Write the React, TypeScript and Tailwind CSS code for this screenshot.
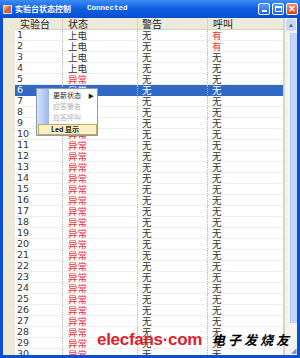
import React from 'react';

type Row = { id: number; status: string; warn: string; call: string };

const rows: Row[] = Array.from({ length: 30 }, (_, i) => {
  const id = i + 1;
  return {
    id,
    status: id <= 4 ? '上电' : '异常',
    warn: '无',
    call: id <= 2 ? '有' : '无',
  };
});

const cjk = { fontFamily: '"Noto Sans CJK SC", "DejaVu Sans", sans-serif' };

function TitleButtons() {
  return (
    <div className="flex items-center gap-[2px] pr-[2px]">
      <div className="w-[12px] h-[12px] rounded-[2px] border border-white bg-gradient-to-b from-[#5a9cff] to-[#1c5fe0] flex items-end justify-center pb-[2px]">
        <div className="w-[5px] h-[2px] bg-white" />
      </div>
      <div className="w-[12px] h-[12px] rounded-[2px] border border-white bg-gradient-to-b from-[#5a9cff] to-[#1c5fe0] flex items-center justify-center">
        <div className="w-[7px] h-[6px] border border-white border-t-2" />
      </div>
      <div className="w-[12px] h-[12px] rounded-[2px] border border-white bg-gradient-to-b from-[#f08a6a] to-[#d43c14] flex items-center justify-center text-white text-[10px] leading-none font-bold" style={{ fontFamily: '"DejaVu Sans", sans-serif' }}>
        ×
      </div>
    </div>
  );
}

export default function App() {
  return (
    <div className="w-[300px] h-[358px] bg-[#0a4fd6] flex flex-col overflow-hidden relative">
      {/* title bar */}
      <div className="h-[18px] shrink-0 flex items-center bg-gradient-to-b from-[#3d8cf7] via-[#0d5fe0] to-[#0a4fd0]">
        <div className="w-[9px] h-[9px] ml-[3px] bg-gradient-to-br from-[#f5d25a] via-[#e55a2a] to-[#3a6fd8] border border-[#ffffffaa]" />
        <span className="ml-[3px] text-white text-[8px] font-bold leading-none whitespace-nowrap" style={cjk}>实验台状态控制</span>
        <span className="ml-[16px] text-white text-[7.5px] font-bold leading-none" style={{ fontFamily: '"Liberation Mono", monospace' }}>Connected</span>
        <div className="flex-1" />
        <TitleButtons />
      </div>

      {/* body */}
      <div className="flex-1 flex mx-[3px] mb-[3px] bg-[#ece9d8] min-h-0">
        <div className="w-[12px] bg-[#ece9d8] shrink-0" />
        <div className="w-[268px] bg-white flex flex-col text-[#333] overflow-hidden" style={cjk}>
          <div className="h-[12px] flex items-center bg-[#ebeadb] border-b border-[#d6d2c2] text-[10px] leading-[11px] text-[#222] shrink-0">
            <div className="w-[48px] pl-[5px] border-r border-[#d6d2c2]">实验台</div>
            <div className="w-[75px] pl-[5px] border-r border-[#d6d2c2]">状态</div>
            <div className="w-[70px] pl-[4px] border-r border-[#d6d2c2]">警告</div>
            <div className="w-[75px] pl-[5px]">呼叫</div>
          </div>
          {rows.map((r) => {
            const sel = r.id === 6;
            return (
              <div
                key={r.id}
                className={`h-[11px] flex text-[9.5px] leading-[10px] shrink-0 border-b ${sel ? 'bg-[#316ac5] text-white border-[#316ac5]' : 'border-[#eeeeee]'}`}
              >
                <div className="w-[48px] pl-[2px] border-r border-dotted border-[#bbb]" style={{ fontFamily: '"DejaVu Sans", sans-serif', fontSize: 9.5 }}>{r.id}</div>
                <div className={`w-[75px] pl-[5px] border-r border-dotted border-[#bbb] ${!sel && r.status === '异常' ? 'text-[#f03030]' : ''}`}>{r.status}</div>
                <div className="w-[70px] pl-[4px] border-r border-dotted border-[#bbb]">{r.warn}</div>
                <div className={`w-[75px] pl-[4px] ${r.call === '有' ? 'text-[#f03030]' : ''}`}>{r.call}</div>
              </div>
            );
          })}
        </div>
        <div className="w-[2px] bg-[#d8d4c8]" />
        {/* scrollbar */}
        <div className="w-[12px] bg-[#f4f3ee] flex flex-col">
          <div className="h-[12px] mx-[1px] mt-[1px] rounded-[2px] bg-[#c8d8f8] flex items-center justify-center text-[#4d6185] text-[6px] leading-none">▲</div>
          <div className="flex-1 flex justify-end py-[2px]">
            <div className="w-[7px] h-[290px] bg-[#c4d5fa] border-l border-[#b2c6f2]" />
          </div>
          <div className="h-[8px] text-[#7b8db8] text-[7px] leading-none text-right pr-[1px]">◢</div>
        </div>
      </div>

      {/* context menu */}
      <div className="absolute left-[36px] top-[88px] w-[62px] h-[48px] bg-white border border-[#8c9ab8] flex" style={cjk}>
        <div className="w-[12px] bg-gradient-to-r from-[#d6e4fb] to-[#9ab6e8]" />
        <div className="flex-1 flex flex-col text-[7px] leading-[11px] pt-[1px]">
          <div className="h-[11px] flex items-center pl-[4px] text-[#222]">
            <span>更新状态</span>
            <span className="ml-auto mr-[3px] text-[6px]">▶</span>
          </div>
          <div className="h-[11px] pl-[4px] text-[#b0b0b0]">应答警告</div>
          <div className="h-[11px] pl-[4px] text-[#b0b0b0]">应答呼叫</div>
        </div>
      </div>
      <div className="absolute left-[38px] top-[124px] w-[59px] h-[11px] bg-[#fbf0c4] border border-[#c7a960] text-[7px] leading-[9px] font-bold pl-[12px] text-[#222]" style={cjk}>
        Led 显示
      </div>

      {/* watermark */}
      <div className="absolute left-[97px] top-[331px] flex items-center whitespace-nowrap">
        <span className="text-[#e21d2a] text-[17px] font-bold leading-none tracking-[-0.3px]" style={{ fontFamily: '"Liberation Sans", Arial, sans-serif' }}>elecfans·com</span>
        <span className="ml-[10px] text-black text-[13px] italic leading-none tracking-[3px]" style={{ fontFamily: '"Noto Sans CJK SC", serif', fontWeight: 700 }}>电子发烧友</span>
      </div>
    </div>
  );
}
